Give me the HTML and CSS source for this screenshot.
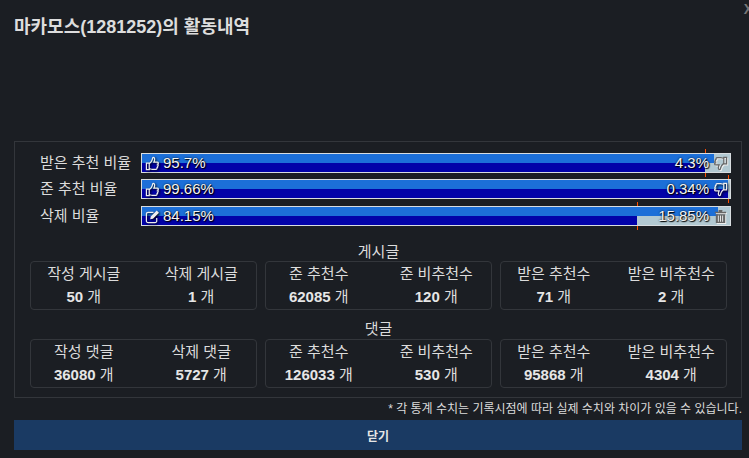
FILE: index.html
```html
<!DOCTYPE html>
<html lang="ko">
<head>
    <meta charset="UTF-8">
    <title>활동내역</title>
    <link rel="stylesheet" href="styles.css">
</head>
<body>
    <svg class="icon-defs" width="0" height="0">
        <symbol id="i-up" viewBox="0 0 16 16">
            <path d="M1.500 7.500h3v7h-3zM4.500 8.300c1.500-1.300 3-3.100 3.300-4.700.2-1 .1-2.100 1-2.100 1.300 0 1.700 1.500 1.400 2.900-.1.700-.4 1.400-.7 2.100h3.400c1.600 0 1.800 1.800.6 2.200.9.500.8 1.800-.2 2.100.6.700.3 1.700-.6 1.900.3.900-.2 1.600-1.100 1.600H7.800c-1.300 0-2.100-.6-3.300-.8" fill="none" stroke="currentColor" stroke-width="1.300"/>
        </symbol>
        <symbol id="i-down" viewBox="0 0 16 16">
            <path d="M14.500 8.500h-3v-7h3zM11.500 7.700c-1.500 1.300-3 3.100-3.300 4.700-.2 1-.1 2.100-1 2.100-1.300 0-1.700-1.500-1.400-2.900.1-.7.4-1.400.7-2.100H3.100c-1.600 0-1.800-1.800-.6-2.200-.9-.5-.8-1.800.2-2.100-.6-.7-.3-1.700.6-1.900-.3-.9.2-1.600 1.100-1.600h3.800c1.300 0 2.100.6 3.300.8" fill="none" stroke="currentColor" stroke-width="1.300"/>
        </symbol>
        <symbol id="i-edit" viewBox="0 0 16 16">
            <path d="M12.500 9.500v3.200a1.800 1.800 0 0 1-1.800 1.800H3.300a1.800 1.800 0 0 1-1.800-1.800V5.300a1.800 1.800 0 0 1 1.800-1.800H9" fill="none" stroke="currentColor" stroke-width="1.300"/>
            <path d="M5.500 11l.6-3 6.400-6.500 2.400 2.400L8.500 10.400z" fill="currentColor"/>
        </symbol>
        <symbol id="i-trash" viewBox="0 0 16 16">
            <path d="M2 3h12v1.500H2zM6 1h4v2H6z" fill="currentColor"/>
            <path d="M3 5.500h10V15H3zM5.200 7v6.500h1V7zM7.500 7v6.500h1V7zM9.800 7v6.500h1V7z" fill="currentColor" fill-rule="evenodd"/>
        </symbol>
    </svg>

    <div class="modal">
        <button class="close-x">X</button>
        <h1 class="title">마카모스(1281252)의 활동내역</h1>

        <div class="panel">
            <div class="bar-row">
                <div class="bar-label">받은 추천 비율</div>
                <div class="bar">
                    <div class="fill-top" style="width: 97.3%"></div>
                    <div class="fill-bottom" style="width: 95.7%"></div>
                    <div class="bar-text">
                        <span class="bar-left"><svg class="icon"><use href="#i-up"/></svg>95.7%</span>
                        <span class="bar-right">4.3%<svg class="icon icon-grey"><use href="#i-down"/></svg></span>
                    </div>
                    <i class="tick" style="left: 95.7%"></i>
                </div>
            </div>
            <div class="bar-row">
                <div class="bar-label">준 추천 비율</div>
                <div class="bar">
                    <div class="fill-top" style="width: 99.66%"></div>
                    <div class="fill-bottom" style="width: 99.66%"></div>
                    <div class="bar-text">
                        <span class="bar-left"><svg class="icon"><use href="#i-up"/></svg>99.66%</span>
                        <span class="bar-right">0.34%<svg class="icon"><use href="#i-down"/></svg></span>
                    </div>
                    <i class="tick" style="left: 99.66%"></i>
                </div>
            </div>
            <div class="bar-row bar-row-last">
                <div class="bar-label">삭제 비율</div>
                <div class="bar">
                    <div class="fill-top" style="width: 98%"></div>
                    <div class="fill-bottom" style="width: 84.15%"></div>
                    <div class="bar-text">
                        <span class="bar-left"><svg class="icon"><use href="#i-edit"/></svg>84.15%</span>
                        <span class="bar-right">15.85%<svg class="icon icon-grey"><use href="#i-trash"/></svg></span>
                    </div>
                    <i class="tick" style="left: 84.15%"></i>
                </div>
            </div>

            <div class="section-title">게시글</div>
            <div class="groups">
                <div class="group">
                    <div class="stat"><div>작성 게시글</div><div class="stat-num"><b>50</b> 개</div></div>
                    <div class="stat"><div>삭제 게시글</div><div class="stat-num"><b>1</b> 개</div></div>
                </div>
                <div class="group">
                    <div class="stat"><div>준 추천수</div><div class="stat-num"><b>62085</b> 개</div></div>
                    <div class="stat"><div>준 비추천수</div><div class="stat-num"><b>120</b> 개</div></div>
                </div>
                <div class="group">
                    <div class="stat"><div>받은 추천수</div><div class="stat-num"><b>71</b> 개</div></div>
                    <div class="stat"><div>받은 비추천수</div><div class="stat-num"><b>2</b> 개</div></div>
                </div>
            </div>

            <div class="section-title section-title-2">댓글</div>
            <div class="groups">
                <div class="group">
                    <div class="stat"><div>작성 댓글</div><div class="stat-num"><b>36080</b> 개</div></div>
                    <div class="stat"><div>삭제 댓글</div><div class="stat-num"><b>5727</b> 개</div></div>
                </div>
                <div class="group">
                    <div class="stat"><div>준 추천수</div><div class="stat-num"><b>126033</b> 개</div></div>
                    <div class="stat"><div>준 비추천수</div><div class="stat-num"><b>530</b> 개</div></div>
                </div>
                <div class="group">
                    <div class="stat"><div>받은 추천수</div><div class="stat-num"><b>95868</b> 개</div></div>
                    <div class="stat"><div>받은 비추천수</div><div class="stat-num"><b>4304</b> 개</div></div>
                </div>
            </div>
        </div>

        <div class="note">* 각 통계 수치는 기록시점에 따라 실제 수치와 차이가 있을 수 있습니다.</div>
        <button class="close-btn">닫기</button>
    </div>
</body>
</html>
```
FILE: styles.css
```css
html, body {
    margin: 0;
    height: 100%;
    overflow: hidden;
}
body {
    font-family: "Liberation Sans", "Noto Sans CJK KR", sans-serif;
    font-size: 15px;
    background-color: #1b1e23;
    color: #dcdcdc;
}
.icon-defs {
    position: absolute;
}
.modal {
    position: relative;
    padding: 0 7px 0 14px;
}
.close-x {
    position: absolute;
    top: 1px;
    right: -4px;
    padding: 0;
    border: 0;
    background: none;
    color: #777;
    font: bold 14px "Liberation Sans", sans-serif;
}
.title {
    margin: 0;
    height: 141px;
    padding-top: 16px;
    box-sizing: border-box;
    font-size: 18px;
    line-height: 22px;
    font-weight: bold;
    color: #ddd;
}
.panel {
    height: 257px;
    box-sizing: border-box;
    padding: 11px 14px 0 15px;
    border: 1px solid #33363b;
}
.bar-row {
    display: flex;
    align-items: center;
    height: 20px;
    margin-bottom: 6px;
}
.bar-row-last {
    margin-top: 7px;
}
.bar-label {
    width: 111px;
    padding-left: 10px;
    box-sizing: border-box;
    line-height: 18px;
    margin-top: -1px;
    color: #dcdcdc;
    white-space: nowrap;
}
.bar {
    position: relative;
    flex: none;
    width: 590px;
    margin-right: -4px;
    height: 20px;
    box-sizing: border-box;
    border: 1px solid #d8dde0;
    background-color: #b2c9d2;
}
.fill-top, .fill-bottom {
    position: absolute;
    left: 0;
    height: 50%;
}
.fill-top {
    top: 0;
    background-color: #1c6fd8;
}
.fill-bottom {
    bottom: 0;
    background-color: #0202a8;
}
.bar-text {
    position: relative;
    display: flex;
    justify-content: space-between;
    line-height: 18px;
    color: #f4f4f4;
    text-shadow: 1px 1px 1px #000, 0 0 2px #000;
}
.bar-left, .bar-right {
    display: flex;
    align-items: center;
    gap: 2px;
}
.icon {
    width: 15px;
    height: 15px;
    margin: 0 1px 0 3px;
    color: #eee;
    filter: drop-shadow(1px 1px 1px #000);
}
.bar-right .icon {
    margin: 0 2px;
}
.icon-grey {
    color: #666;
    filter: drop-shadow(1px 1px 0 #eee);
}
/* marks stick out above and below the bar only */
.tick {
    position: absolute;
    top: -5px;
    bottom: -5px;
    width: 1px;
}
.tick::before, .tick::after {
    content: "";
    position: absolute;
    left: 0;
    width: 1px;
    height: 4px;
    background-color: #ff4d00;
}
.tick::before {
    top: 0;
}
.tick::after {
    bottom: 0;
}
.section-title {
    margin-top: 16px;
    height: 19px;
    line-height: 19px;
    text-align: center;
    color: #dcdcdc;
}
.section-title-2 {
    margin-top: 9px;
    margin-bottom: 1px;
}
.groups {
    display: grid;
    grid-template-columns: repeat(3, 1fr);
    gap: 8px;
}
.group {
    display: grid;
    grid-template-columns: 1fr 1fr;
    column-gap: 12px;
    height: 49px;
    box-sizing: border-box;
    padding-right: 2px;
    padding-top: 1px;
    border: 1px solid #33363b;
    border-radius: 4px;
}
.stat {
    text-align: center;
    line-height: 21px;
    white-space: nowrap;
}
.stat-num {
    line-height: 25px;
}
.stat b {
    color: #e6e6e6;
}
.note {
    height: 22px;
    line-height: 23px;
    font-size: 12px;
    text-align: right;
    color: #dcdcdc;
    white-space: nowrap;
}
.close-btn {
    display: block;
    width: 100%;
    height: 30px;
    padding: 0;
    border: 0;
    background-color: #1a3a63;
    color: #e6e6e6;
    font: bold 12px "Liberation Sans", "Noto Sans CJK KR", sans-serif;
}
```
